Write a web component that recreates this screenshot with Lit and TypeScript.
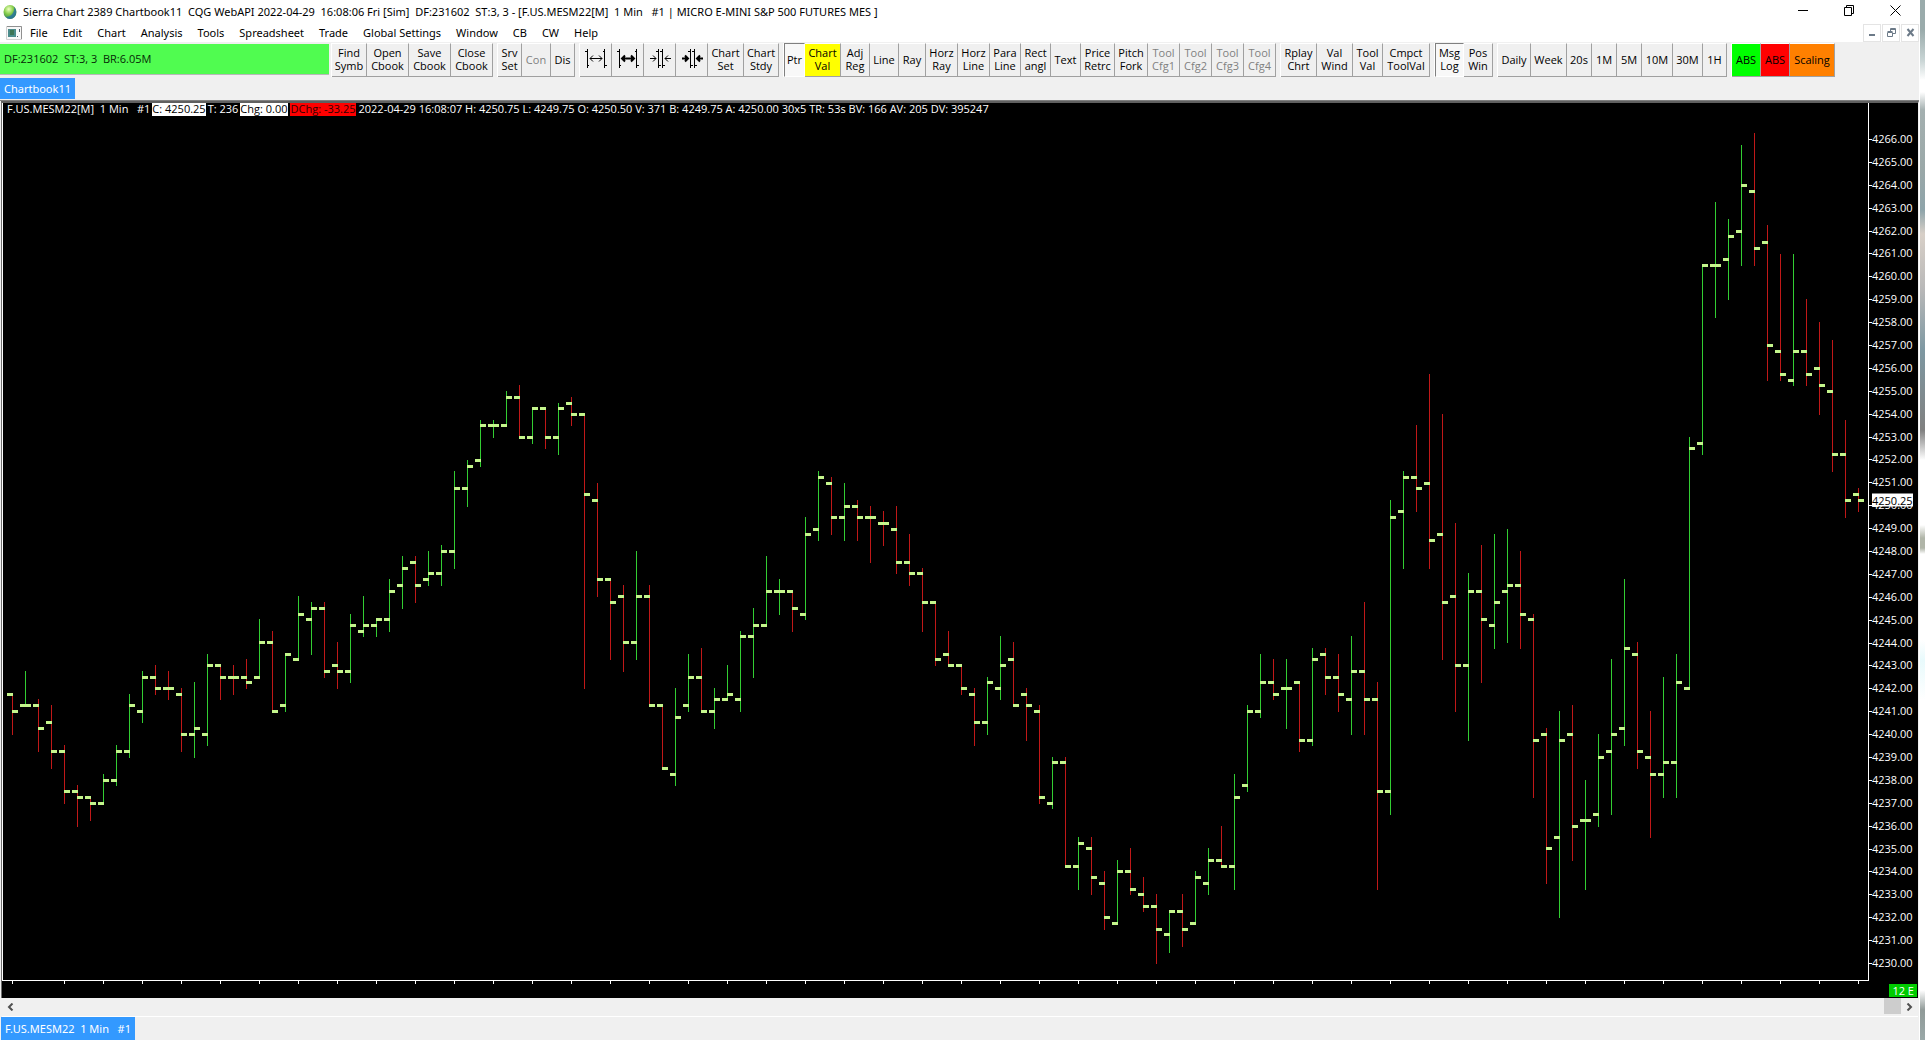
import { LitElement, html, css, svg, nothing } from "lit";
import { customElement } from "lit/decorators.js";
import { classMap } from "lit/directives/class-map.js";

const BASE_PRICE = 4230;
const TOP_PRICE = 4266;
const BAR_STEP = 13;
const FIRST_X = 9;
const PLOT_W = 1865;
const PLOT_H = 878;
const ZERO_Y = 861;
const TICK_H = 825 / 144;

/* One bar per entry: open, high, low, close in quarter-point ticks above BASE_PRICE, then direction. */
const BARS: [number, number, number, number, 0 | 1][] = [
  [47,47,40,44,0],[45,51,45,45,1],[45,46,37,41,0],[42,45,34,37,0],[37,38,28,30,0],[30,31,24,29,0],
  [29,29,25,28,0],[28,33,28,32,1],[32,38,31,37,1],[37,47,36,45,1],[44,51,42,50,1],[50,52,47,48,0],
  [48,51,46,48,0],[47,48,37,40,0],[40,49,36,41,1],[40,54,38,52,1],[52,52,46,50,0],[50,52,47,50,0],
  [50,53,48,49,0],[50,60,50,56,1],[56,58,44,44,0],[45,54,44,54,1],[53,64,53,61,1],[60,63,54,62,1],
  [62,63,50,51,0],[52,56,48,51,0],[51,61,49,59,1],[58,64,57,59,1],[59,60,57,60,1],[60,67,58,65,1],
  [66,71,62,69,1],[70,71,63,66,0],[67,72,66,68,1],[68,73,66,72,1],[72,86,69,83,1],[83,88,80,87,1],
  [88,95,87,94,1],[94,95,92,94,1],[94,100,94,99,1],[99,101,92,92,0],[92,97,91,97,1],[97,97,90,92,0],
  [92,98,89,97,1],[98,99,94,96,0],[96,96,48,82,0],[81,84,64,67,0],[67,67,53,63,0],[64,66,51,56,0],
  [56,72,53,64,1],[64,66,45,45,0],[45,45,34,34,0],[33,48,31,43,1],[45,54,44,50,1],[50,55,44,44,0],
  [44,48,41,46,1],[46,52,46,47,1],[46,58,44,57,1],[57,62,50,59,1],[59,71,59,65,1],[65,67,61,65,1],
  [65,65,58,62,0],[61,78,60,75,1],[76,86,74,85,1],[84,85,75,78,0],[78,84,74,80,1],[80,81,74,78,0],
  [78,80,70,78,0],[77,79,73,77,0],[76,80,68,70,0],[70,75,66,68,0],[68,69,58,63,0],[63,63,52,53,0],
  [54,58,52,52,0],[52,52,47,48,0],[47,48,38,42,0],[42,50,40,49,1],[48,57,46,52,1],[53,56,45,45,0],
  [47,48,39,45,0],[44,45,28,29,0],[28,36,27,35,1],[35,36,17,17,0],[17,22,13,21,1],[20,22,12,15,0],
  [14,16,6,8,0],[7,18,7,16,1],[16,20,12,13,0],[12,15,9,10,0],[10,12,0,6,0],[5,9,2,9,1],
  [9,12,3,6,0],[7,16,7,15,1],[14,20,12,18,1],[18,24,17,17,0],[17,33,13,29,1],[31,45,30,44,1],
  [44,54,43,49,1],[49,53,46,47,0],[48,53,41,48,1],[49,49,37,39,0],[39,55,38,53,1],[54,55,47,50,0],
  [50,54,44,47,0],[46,57,40,51,1],[51,63,40,46,0],[46,49,13,30,0],[30,81,26,78,1],[79,86,69,85,1],
  [85,94,79,83,0],[84,103,69,74,0],[75,96,53,63,0],[64,77,44,52,0],[52,68,39,65,1],[65,73,49,60,0],
  [59,75,55,63,1],[65,76,56,66,1],[66,72,55,61,0],[60,61,29,39,0],[40,41,14,20,0],[22,44,8,39,1],
  [40,45,18,24,0],[25,32,13,25,1],[26,40,24,36,1],[37,53,26,40,1],[41,67,38,55,1],[54,56,34,37,0],
  [36,44,22,33,0],[33,50,29,35,1],[35,54,29,49,1],[48,92,48,90,1],[91,122,89,122,1],[122,133,113,122,1],
  [123,130,116,127,1],[128,143,122,136,1],[135,145,122,125,0],[126,129,102,108,0],[107,124,102,103,0],
  [102,124,101,107,1],[107,116,101,103,0],[104,112,96,101,0],[100,109,86,89,0],[89,95,78,81,0],[82,83,79,81,0],
];

type Icon = "spread-thin" | "spread-bold" | "squeeze-thin" | "squeeze-bold";
interface Tool {
  label: string;
  w: number;
  off?: boolean;
  on?: boolean;
  tone?: "yellow" | "green" | "red" | "orange";
  icon?: Icon;
}

const GROUPS: Tool[][] = [
  [
    { label: "Find\nSymb", w: 35 }, { label: "Open\nCbook", w: 42 },
    { label: "Save\nCbook", w: 42 }, { label: "Close\nCbook", w: 42 },
  ],
  [{ label: "Srv\nSet", w: 24 }, { label: "Con", w: 29, off: true }, { label: "Dis", w: 24 }],
  [
    { label: "Increase bar spacing", w: 32, icon: "spread-thin" },
    { label: "Increase bar width", w: 32, icon: "spread-bold" },
    { label: "Decrease bar spacing", w: 32, icon: "squeeze-thin" },
    { label: "Decrease bar width", w: 32, icon: "squeeze-bold" },
    { label: "Chart\nSet", w: 36 }, { label: "Chart\nStdy", w: 35 },
  ],
  [
    { label: "Ptr", w: 21, on: true }, { label: "Chart\nVal", w: 36, tone: "yellow" },
    { label: "Adj\nReg", w: 29 }, { label: "Line", w: 29 }, { label: "Ray", w: 27 },
    { label: "Horz\nRay", w: 32 }, { label: "Horz\nLine", w: 32 }, { label: "Para\nLine", w: 31 },
    { label: "Rect\nangl", w: 30 }, { label: "Text", w: 30 }, { label: "Price\nRetrc", w: 34 },
    { label: "Pitch\nFork", w: 33 }, { label: "Tool\nCfg1", w: 32, off: true },
    { label: "Tool\nCfg2", w: 32, off: true }, { label: "Tool\nCfg3", w: 32, off: true },
    { label: "Tool\nCfg4", w: 32, off: true },
  ],
  [
    { label: "Rplay\nChrt", w: 36 }, { label: "Val\nWind", w: 36 },
    { label: "Tool\nVal", w: 30 }, { label: "Cmpct\nToolVal", w: 47 },
  ],
  [{ label: "Msg\nLog", w: 29, on: true }, { label: "Pos\nWin", w: 29 }],
  [
    { label: "Daily", w: 33 }, { label: "Week", w: 36 }, { label: "20s", w: 25 },
    { label: "1M", w: 25 }, { label: "5M", w: 25 }, { label: "10M", w: 31 },
    { label: "30M", w: 30 }, { label: "1H", w: 24 },
  ],
  [
    { label: "ABS", w: 29, tone: "green" }, { label: "ABS", w: 29, tone: "red" },
    { label: "Scaling", w: 45, tone: "orange" },
  ],
];

const MENUS = ["File", "Edit", "Chart", "Analysis", "Tools", "Spreadsheet", "Trade",
  "Global Settings", "Window", "CB", "CW", "Help"];

const barX = (i: number) => FIRST_X + i * BAR_STEP;
const tickY = (t: number) => Math.round(ZERO_Y - t * TICK_H);

@customElement("price-plot")
class PricePlot extends LitElement {
  static styles = css`
    :host { display: block; min-width: 0; min-height: 0; overflow: hidden; }
    svg { display: block; width: 100%; height: 100%; }
    line { stroke-width: 1px; vector-effect: non-scaling-stroke; }
    .up { stroke: #32cd32; }
    .down { stroke: #c01818; }
    .dash { fill: #c4f58c; }
  `;
  render() {
    return html`<svg viewBox="0 0 ${PLOT_W} ${PLOT_H}" preserveAspectRatio="none"
      shape-rendering="crispEdges" role="img" aria-label="One minute price bars">
      ${BARS.map(([o, h, l, c, up], i) => {
        const x = barX(i);
        return svg`
          <line class=${up ? "up" : "down"} x1=${x + 0.5} x2=${x + 0.5} y1=${tickY(h)} y2=${tickY(l) + 1}></line>
          <rect class="dash" x=${x - 5} y=${tickY(o) - 1} width="6" height="3"></rect>
          <rect class="dash" x=${x} y=${tickY(c) - 1} width="6" height="3"></rect>`;
      })}
    </svg>`;
  }
}

@customElement("time-ticks")
class TimeTicks extends LitElement {
  static styles = css`
    :host { display: block; }
    svg { display: block; width: 100%; height: 3px; }
  `;
  render() {
    const marks = BARS.map((_, i) => i).filter((i) => i === 0 || (i > 1 && i % 3 === 1));
    return html`<svg viewBox="0 0 ${PLOT_W + 2} 3" preserveAspectRatio="none" shape-rendering="crispEdges" aria-hidden="true">
      ${marks.map((i) => svg`<rect x=${barX(i) + 1} y="0" width="1" height="3" fill="#fff"></rect>`)}
    </svg>`;
  }
}

@customElement("tool-bar")
class ToolBar extends LitElement {
  static styles = css`
    :host { display: flex; align-items: flex-start; gap: 4px; height: 35px; overflow: hidden; }
    .status { flex: none; box-sizing: border-box; width: 329px; height: 31px; margin: 1px -2px 0 0; padding: 0 4px;
      background: #50fc50; line-height: 29px; white-space: pre; color: #062806; border-bottom: 1px solid #b8b8b8; }
    .group { display: flex; flex: none; border-left: 1px solid #fff; }
    button { box-sizing: border-box; height: 34px; margin: 0; padding: 0 0 2px; font: inherit; line-height: 13px;
      white-space: pre; text-align: center; color: #000; background: #f0f0f0;
      border: solid; border-width: 1px 1px 1px 0; border-color: #fff #a0a0a0 #a0a0a0;
      display: flex; align-items: center; justify-content: center; overflow: hidden; }
    button:disabled { color: #808080; }
    .on { background: #f8f8f8; border-color: #808080 #fff #fff #808080; border-width: 1px; }
    .yellow { background: #ffff00; }
    .green { background: #00ff00; }
    .red { background: #ff0000; }
    .orange { background: #ff8000; }
    svg { width: 24px; height: 24px; }
  `;
  private icon(kind: Icon) {
    const bold = kind.endsWith("bold");
    const spread = kind.startsWith("spread");
    const w = bold ? 2 : 1;
    const bars = spread
      ? svg`<path d="M3.5 2V21M20.5 2V21M1 4.5H3M21 18.5H23M3 18.5H5M19 4.5H21"></path>`
      : svg`<path d="M10.500 2V21M14.500 2V21M8 4.500H10M12 4.500H14M11 18.500H13M15 18.500H17"></path>`;
    const arrows = spread
      ? svg`<path d="M6 11.500H18" stroke-width=${w}></path>
          <path d="M9 8.500L6 11.500L9 14.500M15 8.500L18 11.500L15 14.500" fill=${bold ? "#000" : "none"} stroke-width=${w}></path>`
      : svg`<path d="M2 11.500H8M17 11.500H23" stroke-width=${w}></path>
          <path d="M5 8.500L8 11.500L5 14.500M20 8.500L17 11.500L20 14.500" fill=${bold ? "#000" : "none"} stroke-width=${w}></path>`;
    return html`<svg viewBox="0 0 24 24" fill="none" stroke="#000" aria-hidden="true">${bars}${arrows}</svg>`;
  }
  render() {
    return html`
      <div class="status">DF:231602  ST:3, 3  BR:6.05M</div>
      ${GROUPS.map((g) => html`<div class="group">${g.map((t) => html`<button
        class=${classMap({ on: !!t.on, [t.tone ?? "plain"]: true })}
        style="width:${t.w}px" ?disabled=${t.off} aria-label=${t.icon ? t.label : nothing}
        aria-pressed=${t.on ? "true" : nothing}>${t.icon ? this.icon(t.icon) : t.label}</button>`)}</div>`)}
    `;
  }
}

@customElement("app-root")
class AppRoot extends LitElement {
  static styles = css`
    :host { display: grid; grid-template-columns: minmax(0, 1fr) 5px; height: 100vh; overflow: hidden;
      font-family: "Open Sans", "Noto Sans", sans-serif; font-size: 11px; color: #000; background: #f0f0f0; }
    button { margin: 0; padding: 0; border: 0; background: none; font: inherit; color: inherit; }
    .window { display: flex; flex-direction: column; min-width: 0; min-height: 0; border-right: 1px solid #fff; }
    .edge { background: linear-gradient(#9aabab 0, #9aabab 30px, #c8d4d4 60px, #fff 80px, #fff 92px,
      #a4b0b0 110px, #9aa8a8 170px, #8ea4aa 210px, #d8d0c8 234px, #b8b8b8 290px, #7e98a2 350px, #808080 430px,
      #fff 460px, #fff 525px, #b0b5a8 538px, #b0b5a8 548px, #fff 554px, #fff 640px, #e8fafc 660px,
      #fff 700px, #fff 990px, #909a98 1010px, #9aa8a8 100%); }
    .titlebar, .menubar, .tab { font-family: "Noto Sans", "Open Sans", sans-serif; }
    .titlebar { flex: none; display: flex; align-items: center; height: 23px; padding: 0 12px 0 3px; background: #fff; }
    .titlebar h1 { flex: 1; margin: 0 0 0 6px; font-size: 11px; font-weight: 400; line-height: 16px; white-space: pre; overflow: hidden; }
    .globe { width: 14px; height: 16px; flex: none; }
    .caption { display: flex; gap: 22px; align-self: flex-start; }
    .caption button { width: 24px; height: 21px; display: grid; place-items: center; }
    .caption svg { width: 11px; height: 11px; display: block; }
    .menubar { flex: none; display: flex; align-items: center; height: 19px; padding-left: 6px; background: #fff; }
    .docicon { width: 16px; height: 14px; flex: none; margin-right: 8px; }
    .menus { display: flex; flex: 1; gap: 15px; }
    .menus button { line-height: 16px; }
    .mdi { display: flex; gap: 1px; }
    .mdi button { box-sizing: border-box; width: 18px; height: 18px; border: 1px solid #e4e4e4; display: grid; place-items: center; }
    .mdi svg { width: 9px; height: 9px; }
    tool-bar { flex: none; margin-top: 1px; }
    .books { flex: none; display: flex; height: 22px; border-bottom: 1px solid #808080; }
    .tab { height: 21px; padding: 0 4px; background: #3399ff; color: #fff; line-height: 21px; white-space: pre; }
    .chart { flex: 1; min-height: 0; margin-left: 1px; display: grid; background: #000; color: #fff;
      border: solid; border-width: 2px 1px 0 1px; border-color: #606060 #f0f0f0 #000 #707070;
      grid-template-columns: minmax(0, 1fr) 49px; grid-template-rows: minmax(0, 1fr) 17px; }
    .plot { display: grid; grid-template-rows: minmax(0, 1fr); position: relative;
      border: 1px solid #fff; border-top: 0; min-height: 0; }
    .readout { position: absolute; left: 4px; top: 0; display: flex; gap: 2px; line-height: 12px; white-space: pre; }
    .lit, .loss { padding-bottom: 1px; }
    .lit { background: #fff; color: #000; }
    .loss { background: #f00; color: #300; padding-left: 1px; padding-right: 1px; }
    .scale { display: flex; flex-direction: column; padding: 24px 0 7px; min-height: 0; position: relative; }
    .mark { flex: 1; min-height: 0; display: flex; align-items: center; line-height: 13px; }
    .mark::before { content: ""; width: 3px; height: 1px; margin-top: 2px; background: #fff; }
    .last { position: absolute; left: 3px; background: #fff; color: #000; line-height: 13px; transform: translateY(-50%); }
    .foot { display: flex; justify-content: flex-end; align-items: flex-end; padding-right: 1px; }
    .badge { box-sizing: border-box; width: 28px; height: 13px; margin-bottom: 1px; background: #0c0; line-height: 13px; text-align: right; padding-right: 3px; white-space: pre; }
    .scroll { flex: none; display: flex; align-items: flex-start; height: 18px; margin: 0 1px 0 2px; background: #f0f0f0; border-bottom: 1px solid #fff; }
    .scroll button { width: 17px; height: 17px; display: grid; place-items: center; }
    .scroll svg { width: 7px; height: 8px; }
    .track { flex: 1; display: flex; justify-content: flex-end; height: 16px; }
    .thumb { width: 17px; background: #cdcdcd; }
    .windows { flex: none; display: flex; height: 23px; padding-left: 1px; }
    .windows .tab { height: 23px; line-height: 23px; }
  `;
  render() {
    const labels = Array.from({ length: TOP_PRICE - BASE_PRICE + 1 }, (_, i) => TOP_PRICE - i);
    return html`
      <div class="window">
        <header class="titlebar">
          <svg class="globe" viewBox="0 0 14 16" aria-hidden="true">
            <defs><radialGradient id="g" cx=".4" cy=".3" r=".8"><stop offset="0" stop-color="#f0ffc0"></stop>
              <stop offset=".45" stop-color="#84cc48"></stop><stop offset="1" stop-color="#1c6c5c"></stop></radialGradient></defs>
            <ellipse cx="7" cy="8" rx="6.500" ry="7" fill="url(#g)"></ellipse>
            <path d="M11 3C14 6 14 11 10 14C8 15.500 4 15 3 13C8 13 12 8 11 3Z" fill="#206cac" opacity=".7"></path>
          </svg>
          <h1>Sierra Chart 2389 Chartbook11  CQG WebAPI 2022-04-29  16:08:06 Fri [Sim]  DF:231602  ST:3, 3 - [F.US.MESM22[M]  1 Min   #1 | MICRO E-MINI S&amp;P 500 FUTURES MES ]</h1>
          <div class="caption">
            <button aria-label="Minimize"><svg viewBox="0 0 11 11" stroke="#000"><path d="M0 5.500H10"></path></svg></button>
            <button aria-label="Restore"><svg viewBox="0 0 11 11" stroke="#000" fill="none"><path d="M.5 2.500H7.500V10.500H.5ZM2.500 2.500V.5H9.500V8.500H7.500"></path></svg></button>
            <button aria-label="Close"><svg viewBox="0 0 11 11" stroke="#000"><path d="M.5 .5L10.500 10.500M10.500 .5L.5 10.500"></path></svg></button>
          </div>
        </header>
        <nav class="menubar">
          <svg class="docicon" viewBox="0 0 16 14" aria-hidden="true">
            <path d="M.5 .5H15.500V13.500H.5Z" fill="#f8f8f8" stroke="#d0d0d0"></path>
            <path d="M1 .5H15.500V13" fill="none" stroke="#909090"></path>
            <path d="M2 3H10V11H2Z" fill="#4c8c8c"></path><path d="M4 4H8V9H4Z" fill="#3c7454"></path>
            <path d="M11 10H12V11H11ZM13 3H14V6H13Z" fill="#506070"></path>
          </svg>
          <div class="menus">${MENUS.map((m) => html`<button>${m}</button>`)}</div>
          <div class="mdi">
            <button aria-label="Minimize chart"><svg viewBox="0 0 9 9"><path d="M1 6H7V8H1Z" fill="#6c7a88"></path></svg></button>
            <button aria-label="Restore chart"><svg viewBox="0 0 9 9" fill="none" stroke="#6c7a88"><path d="M.5 4.500H5.500V8.500H.5ZM.5 3.500H5.500M3.500 3V.5H8.500V5.500H6M3.500 1.500H8.500"></path></svg></button>
            <button aria-label="Close chart"><svg viewBox="0 0 9 9" stroke="#6c7a88" stroke-width="2"><path d="M1.500 1L7.500 8M7.500 1L1.500 8"></path></svg></button>
          </div>
        </nav>
        <tool-bar></tool-bar>
        <div class="books"><button class="tab">Chartbook11</button></div>
        <main class="chart">
          <div class="plot">
            <price-plot></price-plot>
            <div class="readout"><span>F.US.MESM22[M]  1 Min   #1</span><span class="lit">C: 4250.25</span><span>T: 236</span><span class="lit">Chg: 0.00</span><span class="loss">DChg: -33.25</span><span>2022-04-29 16:08:07 H: 4250.75 L: 4249.75 O: 4250.50 V: 371 B: 4249.75 A: 4250.00 30x5 TR: 53s BV: 166 AV: 205 DV: 395247</span></div>
          </div>
          <div class="scale">
            ${labels.map((p) => html`<div class="mark">${p.toFixed(2)}</div>`)}
            <span class="last" style="top:${((ZERO_Y - 81 * TICK_H) / PLOT_H) * 100}%">4250.25</span>
          </div>
          <time-ticks></time-ticks>
          <div class="foot"><span class="badge">12 E</span></div>
        </main>
        <div class="scroll">
          <button aria-label="Scroll left"><svg viewBox="0 0 7 8" fill="none" stroke="#505050" stroke-width="2"><path d="M5.500 .5L2 4L5.500 7.500"></path></svg></button>
          <div class="track"><div class="thumb"></div></div>
          <button aria-label="Scroll right"><svg viewBox="0 0 7 8" fill="none" stroke="#505050" stroke-width="2"><path d="M1.500 .5L5 4L1.500 7.500"></path></svg></button>
        </div>
        <div class="windows"><button class="tab">F.US.MESM22  1 Min   #1</button></div>
      </div>
      <div class="edge"></div>
    `;
  }
}
